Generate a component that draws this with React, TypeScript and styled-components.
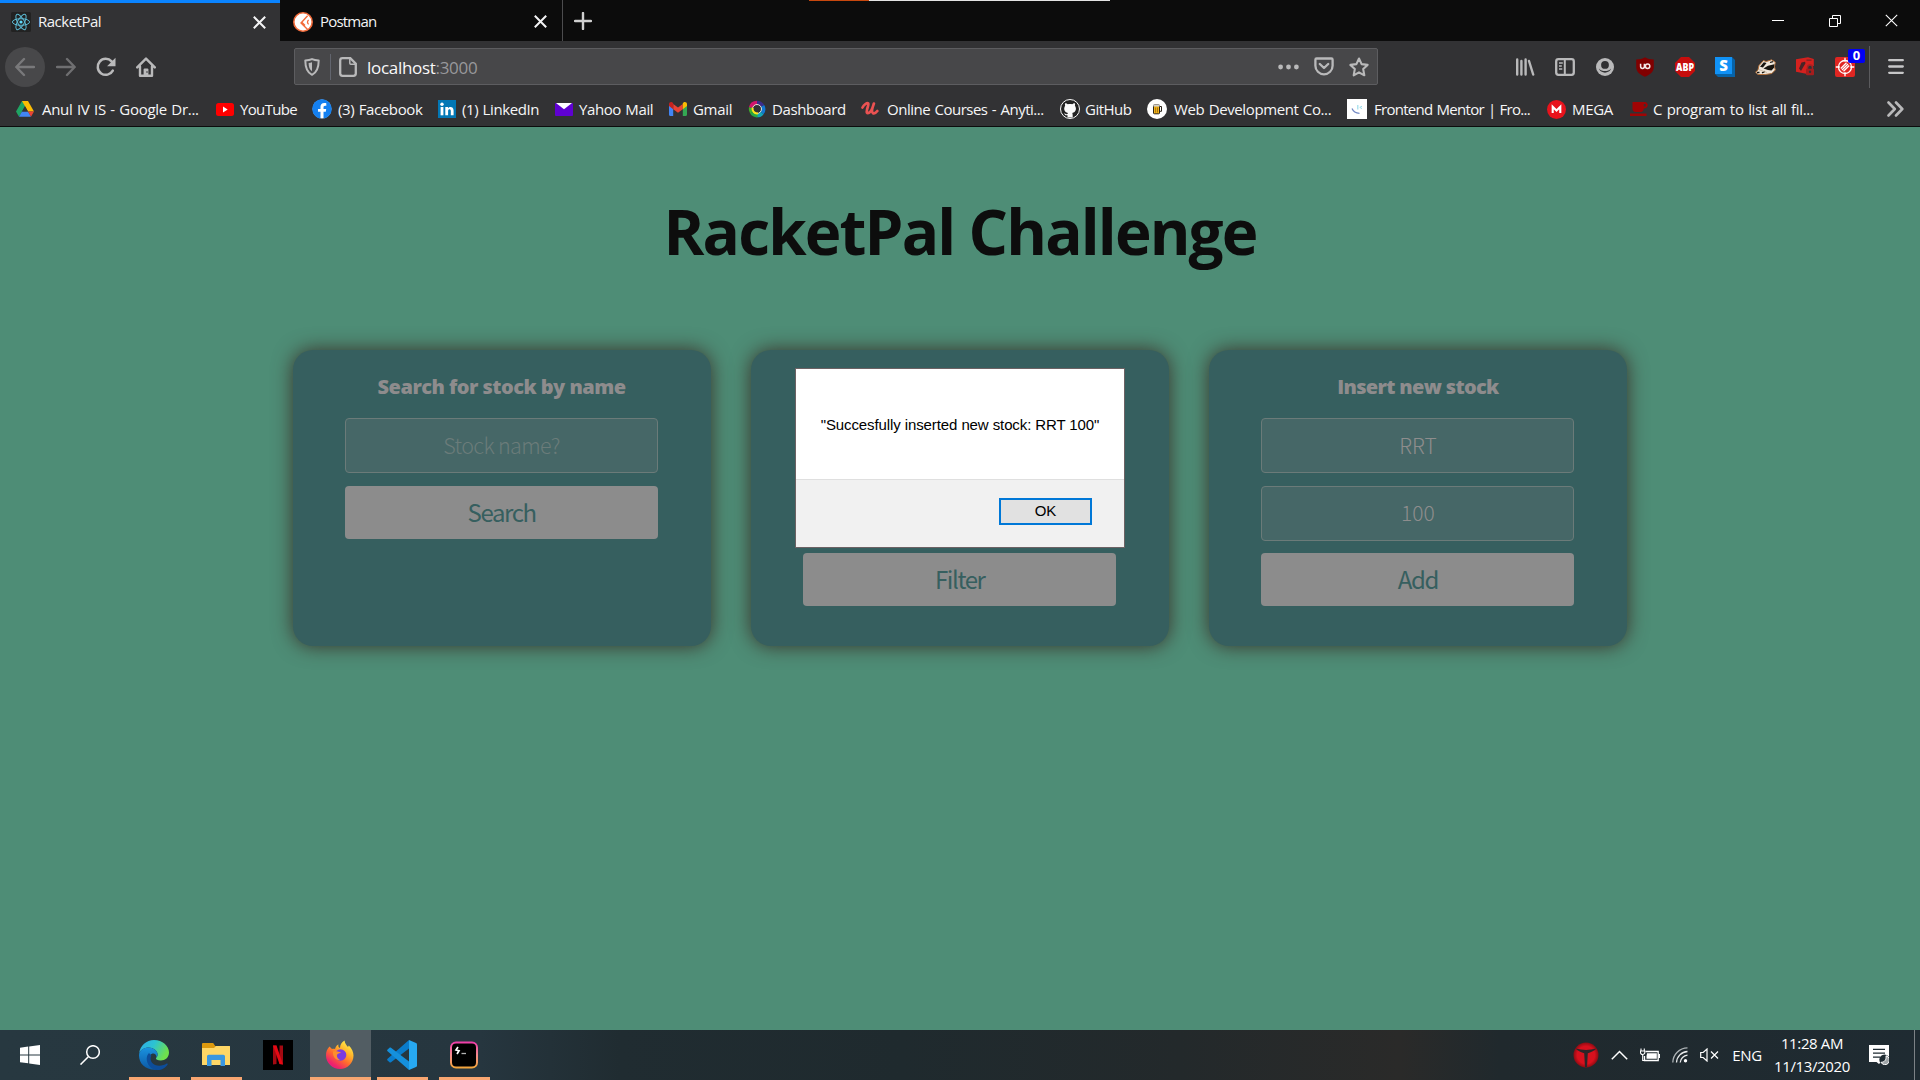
import React from "react";
import styled, { createGlobalStyle } from "styled-components";
import { FaFacebook } from "react-icons/fa";

const GlobalStyle = createGlobalStyle`
  * { box-sizing: border-box; }
  html, body { margin: 0; padding: 0; overflow: hidden; }
  body { font-family: "Open Sans", "Noto Sans", sans-serif; background: #4e8d76; }
  svg { display: block; flex: none; }
`;

const Screen = styled.div`
  width: 1920px;
  height: 1080px;
  display: flex;
  flex-direction: column;
  overflow: hidden;
`;

/* ---------- browser chrome ---------- */
const Chrome = styled.header`
  height: 127px;
  flex: none;
  background: #323234;
  border-bottom: 1px solid #0c0c0d;
  display: flex;
  flex-direction: column;
`;

const TabStrip = styled.div`
  position: relative;
  height: 41px;
  display: flex;
  background: #0c0c0c;
`;

const SnapHint = styled.div`
  position: absolute;
  top: 0;
  left: 809px;
  width: 301px;
  height: 1px;
  background: linear-gradient(90deg, #c8480e 60px, #e4e4e4 60px);
`;

const Tab = styled.div<{ $active?: boolean }>`
  width: ${(p) => (p.$active ? 280 : 283)}px;
  height: 41px;
  display: flex;
  align-items: center;
  padding: ${(p) => (p.$active ? "0 14px 0 11px" : "2px 15px 0 13px")};
  color: #f4f4f5;
  background: ${(p) => (p.$active ? "#323234" : "#0c0c0c")};
  border-top: ${(p) => (p.$active ? "3px solid #0a84ff" : "none")};
  border-right: ${(p) => (p.$active ? "none" : "1px solid #4c4c4e")};
`;

const TabTitle = styled.span<{ $spacing: number }>`
  flex: 1;
  margin-left: 7px;
  padding-bottom: 2px;
  font-size: 15px;
  line-height: 20px;
  letter-spacing: ${(p) => p.$spacing}px;
  white-space: nowrap;
`;

const NewTab = styled.div`
  width: 43px;
  display: flex;
  align-items: center;
  justify-content: center;
  padding-right: 3px;
`;

const WindowButtons = styled.div`
  margin-left: auto;
  display: flex;
  align-items: center;
`;

const WindowButton = styled.div`
  width: 57px;
  height: 40px;
  display: flex;
  align-items: center;
  justify-content: center;
`;

const NavBar = styled.div`
  height: 51px;
  display: flex;
  align-items: center;
  padding-left: 5px;
`;

const NavButton = styled.div<{ $round?: boolean }>`
  width: 40px;
  height: 40px;
  margin-right: ${(p) => (p.$round ? 1 : 0)}px;
  border-radius: 50%;
  background: ${(p) => (p.$round ? "#48484a" : "transparent")};
  display: flex;
  align-items: center;
  justify-content: center;
`;

const UrlBar = styled.div`
  width: 1084px;
  height: 37px;
  margin-left: 128px;
  display: flex;
  align-items: center;
  background: #474749;
  border: 1px solid #5d5d60;
  border-radius: 2px;
  padding: 0 8px 0 9px;
`;

const UrlDivider = styled.span`
  width: 1px;
  height: 26px;
  margin: 0 8px 0 10px;
  background: #62656e;
`;

const UrlText = styled.span`
  flex: 1;
  margin: 1px 0 0 10px;
  font-size: 17px;
  letter-spacing: -0.3px;
  color: #f9f9fa;
  white-space: nowrap;
  em {
    font-style: normal;
    color: #98989b;
  }
`;

const UrlActions = styled.div`
  display: flex;
  align-items: center;
  gap: 15px;
`;

const Extensions = styled.div`
  margin-left: auto;
  display: flex;
  align-items: center;
`;

const Extension = styled.div`
  position: relative;
  width: 40px;
  height: 40px;
  display: flex;
  align-items: center;
  justify-content: center;
`;

const Badge = styled.span`
  position: absolute;
  top: 2px;
  left: 23px;
  width: 17px;
  height: 14px;
  border-radius: 2px;
  background: #0000f5;
  color: #fff;
  font: bold 13px/13px "Open Sans", sans-serif;
  text-align: center;
`;

const MenuButton = styled.div`
  width: 51px;
  height: 42px;
  margin-left: 4px;
  padding-left: 2px;
  border-left: 1px solid #5b5b5e;
  display: flex;
  align-items: center;
  justify-content: center;
`;

const Bookmarks = styled.nav`
  height: 34px;
  display: flex;
  align-items: center;
  padding-left: 15px;
`;

const Bookmark = styled.div<{ $width: number }>`
  width: ${(p) => p.$width}px;
  display: flex;
  align-items: center;
`;

const BookmarkIcon = styled.span`
  width: 20px;
  display: flex;
  justify-content: center;
`;

const BookmarkLabel = styled.span<{ $spacing: number; $gap: number }>`
  margin-left: ${(p) => p.$gap}px;
  padding-bottom: 1px;
  font-size: 15px;
  line-height: 20px;
  letter-spacing: ${(p) => p.$spacing}px;
  word-spacing: 0.9px;
  color: #f6f6f7;
  white-space: nowrap;
`;

const Overflow = styled.div`
  flex: 1;
  display: flex;
  justify-content: flex-end;
  padding-right: 16px;
`;

/* ---------- page ---------- */
const Page = styled.main`
  position: relative;
  flex: 1;
  display: flex;
  flex-direction: column;
  background: #4e8d76;
`;

const Title = styled.h1`
  margin: 61px 0 0;
  height: 86px;
  font-size: 62px;
  line-height: 86px;
  font-weight: 700;
  letter-spacing: -1.85px;
  text-align: center;
  color: #0d0d0d;
  white-space: nowrap;
`;

const CardRow = styled.section`
  margin: 76px 292.5px 0 293px;
  display: grid;
  grid-template-columns: repeat(3, 1fr);
  gap: 40px;
`;

const Card = styled.article`
  height: 296px;
  padding: 24px 53px 0 52px;
  display: flex;
  flex-direction: column;
  border-radius: 20px;
  background: #365f5f;
  box-shadow: 0 0 20px #3a322b;
`;

const CardTitle = styled.h3<{ $spacing: number }>`
  height: 26px;
  margin: 0 0 18px;
  font-size: 20px;
  line-height: 25px;
  font-weight: 800;
  letter-spacing: ${(p) => p.$spacing}px;
  text-align: center;
  color: #8e8c8d;
  white-space: nowrap;
`;

const Field = styled.div<{ $placeholder?: boolean }>`
  height: 55px;
  margin-bottom: 12.5px;
  padding-bottom: 2px;
  display: flex;
  align-items: center;
  justify-content: center;
  border: 1px solid #6b7b79;
  border-radius: 4px;
  background: #466767;
  font-family: "Noto Sans CJK SC", sans-serif;
  font-weight: 300;
  font-size: ${(p) => (p.$placeholder ? 21.5 : 21)}px;
  line-height: 30px;
  letter-spacing: ${(p) => (p.$placeholder ? -0.65 : 0)}px;
  color: ${(p) => (p.$placeholder ? "#6b7c7a" : "#8e8d8d")};
`;

const Submit = styled.button`
  height: 53px;
  padding: 0 0 1px;
  border: 0;
  border-radius: 4px;
  background: #8c8c8c;
  font-family: "Noto Sans CJK SC", sans-serif;
  font-size: 24px;
  line-height: 30px;
  letter-spacing: -1.4px;
  color: #365f5f;
`;

const Dialog = styled.div`
  position: absolute;
  left: 795px;
  top: 241px;
  width: 330px;
  height: 180px;
  border: 1px solid #6c6264;
  background: #fff;
  display: flex;
  flex-direction: column;
  font-family: "Liberation Sans", Arial, sans-serif;
  font-size: 15px;
  color: #000;
`;

const Message = styled.p`
  flex: 1;
  margin: 0;
  padding: 1px 0 0;
  display: flex;
  align-items: center;
  justify-content: center;
  letter-spacing: -0.1px;
  white-space: nowrap;
`;

const DialogFooter = styled.div`
  height: 68px;
  padding: 18px 32px 0 0;
  display: flex;
  justify-content: flex-end;
  border-top: 1px solid #dfdfdf;
  background: #f1f1f1;
`;

const OkButton = styled.button`
  width: 93px;
  height: 27px;
  padding: 0 0 2px;
  border: 2px solid #0078d7;
  background: #e1e1e1;
  font: 15px "Liberation Sans", Arial, sans-serif;
  color: #000;
`;

/* ---------- taskbar ---------- */
const Taskbar = styled.footer`
  height: 50px;
  flex: none;
  display: flex;
  background: linear-gradient(90deg, #273840 0, #26363f 480px, #202c31 620px, #1f2a2e 900px, #23292b 1180px, #2a2a29 1400px, #20292d 1500px, #1f2b32 1920px);
`;

const TaskItem = styled.div<{ $width: number; $open?: boolean; $active?: boolean }>`
  width: ${(p) => p.$width}px;
  height: 50px;
  margin-right: ${(p) => (p.$open ? (p.$active ? 6 : 11) : 0)}px;
  padding-right: ${(p) => (p.$open ? 1 : 0)}px;
  display: flex;
  align-items: center;
  justify-content: center;
  background: ${(p) => (p.$active ? "#525d63" : "transparent")};
  box-shadow: ${(p) => (p.$open ? "inset 0 -3px #f8a671" : "none")};
`;

const Pinned = styled(TaskItem)`
  justify-content: flex-start;
  padding-left: 10px;
`;

const Tray = styled.div`
  margin-left: auto;
  display: flex;
  align-items: center;
`;

const TrayIcon = styled.div<{ $width: number }>`
  width: ${(p) => p.$width}px;
  display: flex;
  justify-content: center;
`;

const Language = styled.span`
  width: 46px;
  padding-left: 4px;
  text-align: center;
  font-size: 15px;
  letter-spacing: -0.4px;
  color: #fff;
`;

const Clock = styled.div`
  width: 88px;
  display: flex;
  flex-direction: column;
  align-items: center;
  font-size: 15px;
  line-height: 23px;
  letter-spacing: -0.37px;
  color: #fff;
  white-space: nowrap;
`;

const ShowDesktop = styled.div`
  width: 6px;
  height: 50px;
  margin-left: 12px;
  border-left: 1px solid #7c8286;
`;

/* ---------- icons ---------- */
const G = "#b9b9ba";

const ReactLogo = () => (
  <svg width="20" height="20" viewBox="0 0 20 20">
    <rect width="20" height="20" rx="1.5" fill="#222" />
    <g fill="none" stroke="#5cb9d2" strokeWidth="1">
      <ellipse cx="10" cy="10" rx="8.6" ry="3.3" />
      <ellipse cx="10" cy="10" rx="8.6" ry="3.3" transform="rotate(60 10 10)" />
      <ellipse cx="10" cy="10" rx="8.6" ry="3.3" transform="rotate(120 10 10)" />
    </g>
    <circle cx="10" cy="10" r="1.6" fill="#61dafb" />
  </svg>
);

const PostmanLogo = () => (
  <svg width="20" height="20" viewBox="0 0 20 20">
    <circle cx="10" cy="10" r="9.2" fill="#fff" stroke="#f26b3a" strokeWidth="1.6" />
    <path d="M14.6 3.8 8 11l6.4 6.2M8.8 10.2l3.2 3.2" fill="none" stroke="#f26b3a" strokeWidth="1.4" />
    <path d="M15.6 7.8c-1.4 1.4-1.4 3.2 0 4.6" fill="none" stroke="#f26b3a" strokeWidth="1.2" />
  </svg>
);

const Cross = ({ size = 13, w = 2, color = "#f4f4f5" }: { size?: number; w?: number; color?: string }) => (
  <svg width={size} height={size} viewBox="0 0 13 13">
    <path d="M.8.8 12.2 12.2M12.2.8.8 12.2" stroke={color} strokeWidth={w} fill="none" />
  </svg>
);

const ArrowIcon = ({ flip, color }: { flip?: boolean; color: string }) => (
  <svg width="20" height="20" viewBox="0 0 20 20">
    <path
      d="M19 10H1.5M9 2 1.3 10 9 18"
      transform={flip ? "matrix(-1 0 0 1 20 0)" : undefined}
      fill="none"
      stroke={color}
      strokeWidth="2.4"
      strokeLinecap="round"
      strokeLinejoin="round"
    />
  </svg>
);

const ReloadIcon = () => (
  <svg width="20" height="20" viewBox="0 0 20 20">
    <path d="M16.8 13.6A8 8 0 1 1 15.6 4.4L17 6" fill="none" stroke={G} strokeWidth="2.5" strokeLinecap="round" />
    <path d="M19.5.8v8.4h-8.4z" fill={G} />
  </svg>
);

const HomeIcon = () => (
  <svg width="20" height="20" viewBox="0 0 20 20">
    <path d="M1.2 10.4 10 1.6l8.8 8.8M4 9.5V18.7h12V9.5" fill="none" stroke={G} strokeWidth="2.4" strokeLinecap="round" strokeLinejoin="round" />
    <path d="M7.6 19v-6.5a1 1 0 0 1 1-1h2.8a1 1 0 0 1 1 1V19z" fill={G} />
    <path d="M10.4 15h1.2" stroke="#323234" strokeWidth="1.4" />
  </svg>
);

const ShieldIcon = () => (
  <svg width="16" height="18" viewBox="0 0 16 18">
    <path d="M8 1.1c2 .9 4.2 1.2 6.7 1.3 0 6.5-1.5 11.8-6.7 14.4C2.8 14.2 1.3 8.9 1.3 2.4 3.8 2.3 6 2 8 1.1z" fill="none" stroke={G} strokeWidth="2" strokeLinejoin="round" />
    <path d="M8 4.3v9C5.5 11.5 4.7 8.8 4.6 5c1.2-.1 2.4-.3 3.4-.7z" fill={G} />
  </svg>
);

const PageIcon = () => (
  <svg width="18" height="20" viewBox="0 0 18 20">
    <path d="M3.5 1.2h7.8l5.5 5.5v9.8a2.3 2.3 0 0 1-2.3 2.3h-11a2.3 2.3 0 0 1-2.3-2.3v-13a2.3 2.3 0 0 1 2.3-2.3z" fill="none" stroke={G} strokeWidth="2.3" />
    <path d="M10.8 1.5v4.7a1 1 0 0 0 1 1h4.7" fill="none" stroke={G} strokeWidth="1.5" />
  </svg>
);

const DotsIcon = () => (
  <svg width="21" height="6" viewBox="0 0 21 6" fill={G}>
    <circle cx="2.6" cy="3" r="2.4" />
    <circle cx="10.5" cy="3" r="2.4" />
    <circle cx="18.4" cy="3" r="2.4" />
  </svg>
);

const PocketIcon = () => (
  <svg width="20" height="19" viewBox="0 0 20 19" fill="none" stroke={G} strokeLinecap="round" strokeLinejoin="round">
    <path d="M2.6 1.5h14.8c.7 0 1.2.5 1.2 1.2v6A8.6 8.6 0 0 1 1.4 8.7v-6c0-.7.5-1.2 1.2-1.2z" strokeWidth="2.3" />
    <path d="m5.8 7 4.2 4 4.2-4" strokeWidth="2.4" />
  </svg>
);

const StarIcon = () => (
  <svg width="20" height="20" viewBox="0 0 20 20">
    <path d="m10 1.5 2.6 5.6 6 .8-4.4 4.2 1.1 6.2L10 15.3l-5.3 3 1.1-6.2L1.4 7.9l6-.8z" fill="none" stroke={G} strokeWidth="2.1" strokeLinejoin="round" />
  </svg>
);

const LibraryIcon = () => (
  <svg width="20" height="20" viewBox="0 0 20 20" fill="none" stroke={G} strokeWidth="2.4" strokeLinecap="round">
    <path d="M2.2 2.5v15M6.4 4v13.500M10.6 2.5v15M14 4l4.2 13.5" />
  </svg>
);

const SidebarIcon = () => (
  <svg width="20" height="18" viewBox="0 0 20 18" fill="none" stroke={G}>
    <rect x="1.2" y="1.2" width="17.6" height="15.6" rx="2.2" strokeWidth="2.3" />
    <path d="M9.8 1v16" strokeWidth="2" />
    <path d="M4 5h3.8M4 8h2.8M4 11h3.3" strokeWidth="1.4" />
  </svg>
);

const AccountIcon = () => (
  <svg width="18" height="18" viewBox="0 0 18 18">
    <circle cx="9" cy="9" r="9" fill={G} />
    <circle cx="9" cy="6.9" r="3.9" fill="#323234" />
    <path d="M2.9 10.4c.4 1.2 1.3 2.400 2.400 3.200 2.300 1.500 5.100 1.500 7.400 0 1.100-.8 2-2 2.400-3.200-1.500 2-3.700 2.700-6.100 2.700s-4.600-.7-6.100-2.700z" fill="#323234" />
  </svg>
);

const UblockIcon = () => (
  <svg width="18" height="20" viewBox="0 0 18 20">
    <path d="M9 .2c2.5 1.5 5.5 2.2 8.8 2.3v7.7c0 4.5-3.8 7.5-8.800 9.600C4 17.700.2 14.700.2 10.200V2.500C3.500 2.400 6.500 1.700 9 .2z" fill="#800000" />
    <path d="M4.6 6.800v2.700a1.900 1.900 0 0 0 3.800 0V6.800" fill="none" stroke="#f4eaea" strokeWidth="1.5" />
    <circle cx="11.600" cy="9.200" r="2.200" fill="none" stroke="#f4eaea" strokeWidth="1.500" />
  </svg>
);

const AbpIcon = () => (
  <svg width="20" height="20" viewBox="0 0 20 20">
    <path d="M6 0h8l6 6v8l-6 6H6l-6-6V6z" fill="#c70d0c" />
    <text x="10" y="14" textAnchor="middle" textLength="18" lengthAdjust="spacingAndGlyphs" fontFamily="Open Sans" fontWeight="800" fontSize="11" fill="#fff">ABP</text>
  </svg>
);

const StylusIcon = () => (
  <svg width="20" height="20" viewBox="0 0 20 20">
    <path d="M17 0l3 3v17H3l-3-3z" fill="#0763a8" />
    <rect width="17" height="17" fill="#1192f6" />
    <text x="8.500" y="14" textAnchor="middle" fontFamily="Open Sans" fontWeight="800" fontSize="15" fill="#fff">S</text>
  </svg>
);

const BadgerIcon = () => (
  <svg width="21" height="16" viewBox="0 0 21 16">
    <path d="M.6 13.200 3 11l1-4.500L8.500 1.500l2.500 1 2-.5L16.500.8l3.800 2.400-.8 4.500.8 3.300-3.500 3.500-6.500 1H3z" fill="#efe6da" stroke="#b3703a" strokeWidth="1" />
    <path d="M5 7.800 8.800 3.200l2.700.8L8 8.500z" fill="#17140f" />
    <path d="M8.500 9.500 13 6.800l6.300-1.500-.3 3.500-2.500 2.700-3.500-.5z" fill="#17140f" />
    <path d="M2 13.500h2.500M7 13.800l3-1.500M15 3.500l3-.9" stroke="#17140f" strokeWidth="1.300" />
    <path d="M3.500 10.500 12 13.500" stroke="#c9b79f" strokeWidth=".8" />
  </svg>
);

const RedLockIcon = () => (
  <svg width="18" height="19" viewBox="0 0 18 19">
    <path d="M0 2.300 12 .3 17.800 2v7h-2.300l-1.500-1-2.700 1.800V17L0 14.800z" fill="#d5211e" />
    <path d="M5.500 5.500 9 4.800l.5 1.500L7 10.500 5 14 3 11.500z" fill="#4a2426" />
    <path d="M10.500 2.500h5v1.300h-5z" fill="#7d2424" />
    <path d="M11.500 12v-1.500a2.500 2.500 0 0 1 5 0V12" fill="none" stroke="#a82121" strokeWidth="1.500" />
    <rect x="10" y="11.700" width="8" height="6.500" rx="1" fill="#a51d1d" />
    <circle cx="14" cy="14.800" r="1.200" fill="#323234" />
  </svg>
);

const TargetIcon = () => (
  <svg width="20" height="20" viewBox="0 0 20 20">
    <rect width="20" height="20" rx="2" fill="#e02622" />
    <g fill="none" stroke="#fff" strokeWidth="1.300">
      <circle cx="10" cy="10" r="6.500" />
      <path d="M10 .8v4M10 15.200v4M.8 10h4M15.200 10h4M5.800 11.500 11.500 5.800M8.500 14.200 14.200 8.500M7 13 13 7" />
    </g>
  </svg>
);

const DriveIcon = () => (
  <svg width="18" height="16" viewBox="0 0 18 16">
    <path d="M6 0h6L6 10.500 3 15.800 0 10.500z" fill="#1fa463" />
    <path d="M6 0h6l6 10.500h-6z" fill="#fbbc04" />
    <path d="M6 10.500h6l3 5.300H3z" fill="#4285f4" />
    <path d="M12 10.500h6l-3 5.300z" fill="#ea4335" />
    <path d="M9 5.200 12 10.500H6z" fill="#323234" />
  </svg>
);

const YouTubeIcon = () => (
  <svg width="18" height="13" viewBox="0 0 18 13">
    <rect width="18" height="13" rx="2.500" fill="#f00" />
    <path d="M7 3.600v5.800l4.700-2.900z" fill="#fff" />
  </svg>
);

const FacebookIcon = () => (
  <svg width="20" height="20" viewBox="0 0 20 20">
    <circle cx="10" cy="10" r="9.400" fill="#fff" />
    <FaFacebook size={20} color="#1580f0" />
  </svg>
);

const LinkedInIcon = () => (
  <svg width="18" height="18" viewBox="0 0 18 18">
    <rect width="18" height="18" fill="#0277b5" />
    <rect x="2.600" y="7" width="2.800" height="8.300" fill="#fff" />
    <circle cx="4" cy="4.200" r="1.700" fill="#fff" />
    <path d="M7.300 7H10v1.200c1.300-2 5.600-2 5.600 2.200v4.900h-2.800v-4.400c0-2.300-2.700-2.200-2.700 0v4.400H7.300z" fill="#fff" />
  </svg>
);

const YahooMailIcon = () => (
  <svg width="18" height="13" viewBox="0 0 18 13">
    <rect width="18" height="13" rx="1" fill="#5f01d1" />
    <path d="M1 0h16L9 6.300z" fill="#fff" />
  </svg>
);

const GmailIcon = () => (
  <svg width="18" height="14" viewBox="0 0 18 14">
    <path d="M0 3v9.800c0 .6.500 1.200 1.200 1.200h3V6z" fill="#4285f4" />
    <path d="M18 3v9.800c0 .6-.5 1.200-1.200 1.200h-3V6z" fill="#34a853" />
    <path d="M4.200 2 9 5.600 13.800 2v5.200L9 10.800 4.200 7.200z" fill="#ea4335" />
    <path d="M0 2.200C0 .4 2-.6 3.400.5l.8.600v6.100L0 4z" fill="#c5221f" />
    <path d="M18 2.200c0-1.800-2-2.800-3.400-1.700l-.8.600v6.100L18 4z" fill="#fbbc04" />
  </svg>
);

const DashboardIcon = () => (
  <svg width="18" height="18" viewBox="0 0 18 18" fill="none" strokeWidth="4">
    <path d="M9 2.700a6.300 6.300 0 0 1 5.500 3.200" stroke="#3b2d8c" />
    <path d="M14.500 5.900a6.300 6.300 0 0 1-.5 7" stroke="#1277d3" />
    <path d="M14 12.900a6.300 6.300 0 0 1-6.500 2.200" stroke="#13a3b8" />
    <path d="M9.500 15.300A6.300 6.300 0 0 1 3.800 12.500" stroke="#27a844" />
    <path d="M3.800 12.500A6.300 6.300 0 0 1 2.900 7.500" stroke="#3fae2c" />
    <path d="M2.900 7.500A6.300 6.300 0 0 1 9 2.700" stroke="#d2146c" />
    <circle cx="9" cy="9" r="4.500" stroke="#e9e4d0" strokeWidth="1" />
    <path d="M4.600 7.800a4.600 4.600 0 0 0 5.400 5.500" stroke="#ffe51a" strokeWidth="2" />
  </svg>
);

const UdemyIcon = () => (
  <svg width="18" height="18" viewBox="0 0 18 18">
    <path d="M1.500 7.500C3 4.500 6 2.500 7.200 3.300c1.300 1-2.400 7-1.300 9.300.9 1.800 3.600-.5 5-3.200l2-5.800M12.800 3.600c-1.300 3.700-2.500 8.200-1 9.400 1.400.9 3.200-.3 4.500-2" fill="none" stroke="#eb5252" strokeWidth="2.700" strokeLinecap="round" strokeLinejoin="round" />
  </svg>
);

const GitHubIcon = () => (
  <svg width="20" height="20" viewBox="0 0 20 20">
    <circle cx="10" cy="10" r="9.500" fill="#222" stroke="#fafafa" strokeWidth="1" />
    <path d="M5.200 4.200c1 0 2 .5 2.700 1 1.400-.3 2.800-.3 4.200 0 .7-.5 1.700-1 2.700-1 .4 1 .4 1.800.1 2.600 2 2.600 1.200 6.600-2.700 7.200.5.800.5 1.500.5 4.200a9 9 0 0 1-5.200 0v-2c-2.200.4-2.800-.7-3.500-2 1 .1 1.700 1.300 3.500.9.100-.5.200-.8.500-1.100-3.900-.6-4.700-4.600-2.800-7.200-.3-.8-.4-1.600 0-2.600z" fill="#fafafa" />
  </svg>
);

const BeerIcon = () => (
  <svg width="20" height="20" viewBox="0 0 20 20">
    <circle cx="10" cy="10" r="10" fill="#fff" />
    <rect x="6.500" y="5.800" width="6" height="9" rx=".8" fill="#f4b51b" stroke="#2b2419" strokeWidth="1" />
    <path d="M12.500 7.500h2v4.800h-2" fill="none" stroke="#2b2419" strokeWidth="1" />
    <path d="M6.300 5.500h6.400v2H6.300z" fill="#cfcfcf" />
    <path d="M8.600 8.500v5M10.500 8.500v5" stroke="#8a5d0a" strokeWidth=".7" />
  </svg>
);

const MentorIcon = () => (
  <svg width="20" height="20" viewBox="0 0 20 20">
    <rect width="20" height="20" fill="#fff" />
    <path d="M5 9.500c1.200 3 3.600 4.600 7.500 4.800" fill="none" stroke="#7288c4" strokeWidth="1.200" />
    <path d="M10.800 6v4.500" stroke="#9bdcec" strokeWidth="1.200" />
    <path d="m15 7.200-2.200 1.200L15 9.600" fill="none" stroke="#9bdcec" strokeWidth="1" />
  </svg>
);

const MegaIcon = () => (
  <svg width="19" height="19" viewBox="0 0 19 19">
    <circle cx="9.500" cy="9.500" r="9.500" fill="#e8131c" />
    <path d="M5.700 13V6.800l3.800 3.700 3.800-3.700V13" fill="none" stroke="#fff" strokeWidth="2.100" />
  </svg>
);

const CupIcon = () => (
  <svg width="18" height="14" viewBox="0 0 18 14">
    <path d="M2.500 0h12c4.500 0 4.300 6.500-.7 6.500C13.500 8.500 12.500 10 11 10H5.500C3.500 10 2.500 8.500 2.500 7zM0 11.500h16.500V14H0z" fill="#a00404" />
    <rect x="13.800" y="2" width="1.800" height="2.400" fill="#323234" />
  </svg>
);

const WindowsIcon = () => (
  <svg width="20" height="20" viewBox="0 0 20 20" fill="#fff">
    <path d="M0 2.800 8.200 1.600v7.800H0zM9.200 1.500 20 0v9.400H9.200zM0 10.400h8.200v7.900L0 17.200zM9.200 10.400H20V20L9.200 18.500z" />
  </svg>
);

const SearchIcon = () => (
  <svg width="20" height="20" viewBox="0 0 20 20" fill="none" stroke="#fff" strokeWidth="1.500">
    <circle cx="13" cy="7" r="6.300" />
    <path d="M8.300 11.800.5 19.600" />
  </svg>
);

const EdgeIcon = () => (
  <svg width="30" height="30" viewBox="0 0 30 30">
    <defs>
      <linearGradient id="edgeTop" x1="0" y1="0" x2="1" y2=".4">
        <stop offset="0" stopColor="#2fa9ea" />
        <stop offset=".5" stopColor="#2cc3d2" />
        <stop offset="1" stopColor="#6fe04c" />
      </linearGradient>
      <linearGradient id="edgeBody" x1="0" y1="0" x2="0" y2="1">
        <stop offset="0" stopColor="#1a93e0" />
        <stop offset="1" stopColor="#0c59a4" />
      </linearGradient>
    </defs>
    <path d="M.2 13.500C1 5.500 7.500 0 15 0c8.500 0 15 6 15 12.500 0 5-3.800 8-8.200 8-3.400 0-4.800-1.200-4.800-2 0-.9 1.600-1.300 1.600-4.200C18.600 10.500 14 7.500 9.800 7.500 5 7.500 1.500 10 .2 13.500z" fill="url(#edgeTop)" />
    <path d="M.2 13.500C1.500 10 5 7.500 9.300 7.500c4.700 0 9.300 3 9.300 6.800 0 1.500-.5 2.600-1 3.200-.2-2.700-1.500-4-3.300-4-2.500 0-4.300 2.500-4.100 5.500.3 5 4.300 9.500 9.800 10.300C8 31.500 0 24.500 0 15.500z" fill="url(#edgeBody)" />
    <path d="M12.300 15.500c-2.500 6 2 10.200 8 10.200 3 0 5.300-.9 7.400-2.200.7-.4 1.200.3.900.9-2 3.300-5.800 5.500-10 5.600C12 30 7.500 24 7.700 18.500c.1-2 .8-4 2.300-5.500" fill="#0d4d9a" />
  </svg>
);

const ExplorerIcon = () => (
  <svg width="28" height="24" viewBox="0 0 28 24">
    <path d="M0 1.200C0 .5.500 0 1.200 0h10l2 3H28v5H0z" fill="#dd9a0e" />
    <path d="M0 5h12l2-2h13c.6 0 1 .4 1 1v18H0z" fill="#ffd766" />
    <path d="M5 23V13.500c0-1 .7-1.700 1.700-1.700h14.600c1 0 1.700.7 1.700 1.700V23h-4.500v-6h-9v6z" fill="#3a97e0" />
  </svg>
);

const NetflixIcon = () => (
  <svg width="30" height="30" viewBox="0 0 30 30">
    <rect width="30" height="30" fill="#000" />
    <path d="M10 5.500h3.500V24l-3.500.5zM16.500 5.500H20v19l-3.500-.5z" fill="#a30911" />
    <path d="M10 5.500h3.500L20 24.500 16.500 24z" fill="#e50914" />
  </svg>
);

const FirefoxIcon = () => (
  <svg width="30" height="30" viewBox="0 0 30 30">
    <defs>
      <linearGradient id="fox" x1=".9" y1="0" x2=".2" y2="1">
        <stop offset=".05" stopColor="#fff44f" />
        <stop offset=".35" stopColor="#ffb42a" />
        <stop offset=".6" stopColor="#ff6a2e" />
        <stop offset=".85" stopColor="#f0246a" />
        <stop offset="1" stopColor="#e31587" />
      </linearGradient>
    </defs>
    <path d="M4.500 6.500 7 9c1-.3 2-.3 3 0 .8-2.500 1.800-4 3.500-4.500-.5 1.500 0 3 1.500 3.500C15 5 16.500 2 19.500.5c.5 3.500 2 4.500 3.500 6.500l.8-1.500c3 3 4.700 6.500 4.700 10C28.500 23 22.500 29 15 29S1 23 1 15.500c0-4 1-6.500 3.500-9z" fill="url(#fox)" />
    <circle cx="15.500" cy="15" r="5.800" fill="#7a3be0" />
    <path d="M8 11.500c3-1.500 4.500.5 8 .6-1.300 1.600-3.500 1.500-4 3-.4 1.500 1 4.500 3.500 5-4.500.6-8-3-7.500-8.600z" fill="#ff8f2b" />
  </svg>
);

const VSCodeIcon = () => (
  <svg width="30" height="30" viewBox="0 0 30 30">
    <path d="M22 0v8.500L4 22.300c-.5.400-1 .4-1.500 0L.6 20.500c-.6-.5-.6-1.300 0-1.800z" fill="#0a7ccb" />
    <path d="M22 30v-8.500L4 7.700c-.5-.4-1-.4-1.500 0L.6 9.500c-.6.5-.6 1.300 0 1.800z" fill="#1590dc" />
    <path d="M22 0l7 3c.6.300 1 .8 1 1.500v21c0 .7-.4 1.200-1 1.500l-7 3z" fill="#27a9f2" />
  </svg>
);

const TerminalIcon = () => (
  <svg width="28" height="28" viewBox="0 0 28 28">
    <defs>
      <linearGradient id="term" x1="0" y1="0" x2="0" y2="1">
        <stop offset="0" stopColor="#ef3fa9" />
        <stop offset=".5" stopColor="#f58b8f" />
        <stop offset="1" stopColor="#f3a53c" />
      </linearGradient>
    </defs>
    <rect x="1" y="1.500" width="26" height="25" rx="5" fill="#000" stroke="url(#term)" strokeWidth="2" />
    <path d="M8 6 6 9l3 .8L7 13" fill="none" stroke="#fff" strokeWidth="1.700" />
    <path d="M11.500 12.500h4.500" stroke="#b5b5b5" strokeWidth="1.300" />
  </svg>
);

const BallIcon = () => (
  <svg width="26" height="26" viewBox="0 0 26 26">
    <defs>
      <radialGradient id="ball">
        <stop offset="0" stopColor="#d3141f" />
        <stop offset=".7" stopColor="#d9101d" />
        <stop offset="1" stopColor="#8d0c13" />
      </radialGradient>
    </defs>
    <circle cx="13" cy="13" r="12.500" fill="url(#ball)" />
    <path d="M2.500 6.500C6 7 10 8 13 8s7-1 10.500-1.500C21 9 17.500 10.300 14.800 11.300L14 25h-2l-.8-13.700C8.500 10.300 5 9 2.500 6.500z" fill="#2b2629" />
  </svg>
);

const ChevronUp = () => (
  <svg width="17" height="10" viewBox="0 0 17 10">
    <path d="M.8 9.200 8.500 1.500l7.700 7.700" fill="none" stroke="#fff" strokeWidth="1.500" />
  </svg>
);

const BatteryIcon = () => (
  <svg width="20" height="14" viewBox="0 0 20 14">
    <path d="M5.500 3.500h12.700v9H4.500V8" fill="none" stroke="#fff" strokeWidth="1.300" />
    <path d="M7 5.300h9.800v5.500H6.500V8z" fill="#fff" />
    <path d="M18.500 6h1.500v4h-1.500z" fill="#fff" />
    <path d="M1 .5v2.300M4.300.5v2.300M.5 3h4.300v1.500A2 2 0 0 1 2.700 6.500 2 2 0 0 1 .5 4.500zM2.700 6.500v6h2" fill="none" stroke="#fff" strokeWidth="1.100" />
  </svg>
);

const WifiIcon = () => (
  <svg width="16" height="16" viewBox="0 0 16 16" fill="none" strokeWidth="1.300">
    <path d="M.8 15.500A15 15 0 0 1 15.500.8" stroke="#aeb4b7" />
    <path d="M4.500 15.500A11.500 11.500 0 0 1 15.500 4.500" stroke="#e8eaeb" />
    <path d="M8.200 15.500a8 8 0 0 1 7.300-7.300" stroke="#e8eaeb" />
    <circle cx="13.500" cy="13.800" r="1.700" fill="#fff" />
  </svg>
);

const MuteIcon = () => (
  <svg width="19" height="14" viewBox="0 0 19 14" fill="none" stroke="#fff" strokeWidth="1.200">
    <path d="M.7 4.500h2.500L7 1v12L3.200 9.500H.7z" />
    <path d="m11 3.500 7 7M18 3.500l-7 7" />
  </svg>
);

const NoticeIcon = () => (
  <svg width="20" height="20" viewBox="0 0 20 20">
    <path d="M0 0h20v17h-8l-2 2-2.500-2H0z" fill="#fff" />
    <path d="M4 4.300h12M4 8.200h12M4 12.200h7" stroke="#1f2b32" strokeWidth="1.300" />
    <circle cx="15.500" cy="14.800" r="5.200" fill="#1f2b32" />
    <path d="M17 10.800a4.500 4.500 0 1 1-5 6.500c3.300.2 5.600-2.600 5-6.500z" fill="#9fa5a8" stroke="#fff" strokeWidth="1" />
  </svg>
);

/* ---------- data ---------- */
const bookmarks: { icon: React.ReactNode; label: string; width: number; spacing: number; gap: number }[] = [
  { icon: <DriveIcon />, label: "Anul IV IS - Google Dr...", width: 200, spacing: -0.3, gap: 7 },
  { icon: <YouTubeIcon />, label: "YouTube", width: 97, spacing: -0.65, gap: 5 },
  { icon: <FacebookIcon />, label: "(3) Facebook", width: 125, spacing: -0.38, gap: 6 },
  { icon: <LinkedInIcon />, label: "(1) LinkedIn", width: 117, spacing: -0.4, gap: 5 },
  { icon: <YahooMailIcon />, label: "Yahoo Mail", width: 114, spacing: -0.4, gap: 5 },
  { icon: <GmailIcon />, label: "Gmail", width: 79, spacing: -0.3, gap: 5 },
  { icon: <DashboardIcon />, label: "Dashboard", width: 113, spacing: -0.4, gap: 5 },
  { icon: <UdemyIcon />, label: "Online Courses - Anyti...", width: 200, spacing: -0.49, gap: 7 },
  { icon: <GitHubIcon />, label: "GitHub", width: 87, spacing: -0.5, gap: 5 },
  { icon: <BeerIcon />, label: "Web Development Co...", width: 200, spacing: -0.39, gap: 7 },
  { icon: <MentorIcon />, label: "Frontend Mentor | Fro...", width: 199, spacing: -0.72, gap: 7 },
  { icon: <MegaIcon />, label: "MEGA", width: 83, spacing: -0.3, gap: 6 },
  { icon: <CupIcon />, label: "C program to list all fil...", width: 200, spacing: -0.3, gap: 4 },
];

export default function App() {
  return (
    <Screen>
      <GlobalStyle />
      <Chrome>
        <TabStrip>
          <SnapHint />
          <Tab $active>
            <ReactLogo />
            <TabTitle $spacing={-0.5}>RacketPal</TabTitle>
            <Cross />
          </Tab>
          <Tab>
            <PostmanLogo />
            <TabTitle $spacing={-0.8}>Postman</TabTitle>
            <Cross />
          </Tab>
          <NewTab>
            <svg width="18" height="18" viewBox="0 0 18 18">
              <path d="M9 1v16M1 9h16" stroke="#d0d0d0" strokeWidth="2.4" strokeLinecap="round" />
            </svg>
          </NewTab>
          <WindowButtons>
            <WindowButton>
              <svg width="12" height="12" viewBox="0 0 12 12"><path d="M0 5.500h12" stroke="#fff" /></svg>
            </WindowButton>
            <WindowButton>
              <svg width="12" height="12" viewBox="0 0 12 12" fill="none" stroke="#fff">
                <path d="M.5 3.500h8v8h-8zM3.500 3.500v-3h8v8h-3" />
              </svg>
            </WindowButton>
            <WindowButton>
              <Cross w={1.1} color="#fff" />
            </WindowButton>
          </WindowButtons>
        </TabStrip>
        <NavBar>
          <NavButton $round><ArrowIcon color="#79797b" /></NavButton>
          <NavButton><ArrowIcon flip color="#6f6f71" /></NavButton>
          <NavButton><ReloadIcon /></NavButton>
          <NavButton><HomeIcon /></NavButton>
          <UrlBar>
            <ShieldIcon />
            <UrlDivider />
            <PageIcon />
            <UrlText>localhost<em>:3000</em></UrlText>
            <UrlActions>
              <DotsIcon />
              <PocketIcon />
              <StarIcon />
            </UrlActions>
          </UrlBar>
          <Extensions>
            <Extension><LibraryIcon /></Extension>
            <Extension><SidebarIcon /></Extension>
            <Extension><AccountIcon /></Extension>
            <Extension><UblockIcon /></Extension>
            <Extension><AbpIcon /></Extension>
            <Extension><StylusIcon /></Extension>
            <Extension><BadgerIcon /></Extension>
            <Extension><RedLockIcon /></Extension>
            <Extension>
              <TargetIcon />
              <Badge>0</Badge>
            </Extension>
            <MenuButton>
              <svg width="16" height="17" viewBox="0 0 16 17">
                <path d="M1.200 2.200h13.600M1.200 8.500h13.600M1.200 14.800h13.600" stroke="#c6c6c7" strokeWidth="2.300" strokeLinecap="round" />
              </svg>
            </MenuButton>
          </Extensions>
        </NavBar>
        <Bookmarks>
          {bookmarks.map((b) => (
            <Bookmark key={b.label} $width={b.width}>
              <BookmarkIcon>{b.icon}</BookmarkIcon>
              <BookmarkLabel $spacing={b.spacing} $gap={b.gap}>{b.label}</BookmarkLabel>
            </Bookmark>
          ))}
          <Overflow>
            <svg width="17" height="16" viewBox="0 0 17 16">
              <path d="m1.500 1.500 6.300 6.500-6.300 6.500M9 1.500 15.300 8 9 14.500" fill="none" stroke={G} strokeWidth="2.600" strokeLinecap="round" strokeLinejoin="round" />
            </svg>
          </Overflow>
        </Bookmarks>
      </Chrome>

      <Page>
        <Title>RacketPal Challenge</Title>
        <CardRow>
          <Card>
            <CardTitle $spacing={-0.53}>Search for stock by name</CardTitle>
            <Field $placeholder>Stock name?</Field>
            <Submit>Search</Submit>
          </Card>
          <Card>
            <CardTitle $spacing={-0.53} />
            <Field />
            <Field />
            <Submit>Filter</Submit>
          </Card>
          <Card>
            <CardTitle $spacing={-0.68}>Insert new stock</CardTitle>
            <Field>RRT</Field>
            <Field>100</Field>
            <Submit>Add</Submit>
          </Card>
        </CardRow>
        <Dialog>
          <Message>"Succesfully inserted new stock: RRT 100"</Message>
          <DialogFooter>
            <OkButton>OK</OkButton>
          </DialogFooter>
        </Dialog>
      </Page>

      <Taskbar>
        <TaskItem $width={60}><WindowsIcon /></TaskItem>
        <TaskItem $width={60}><SearchIcon /></TaskItem>
        <TaskItem $width={9} />
        <TaskItem $width={51} $open><EdgeIcon /></TaskItem>
        <TaskItem $width={51} $open><ExplorerIcon /></TaskItem>
        <Pinned $width={57}><NetflixIcon /></Pinned>
        <TaskItem $width={61} $open $active><FirefoxIcon /></TaskItem>
        <TaskItem $width={51} $open><VSCodeIcon /></TaskItem>
        <TaskItem $width={51} $open><TerminalIcon /></TaskItem>
        <Tray>
          <TrayIcon $width={32}><BallIcon /></TrayIcon>
          <TrayIcon $width={34}><ChevronUp /></TrayIcon>
          <TrayIcon $width={27}><BatteryIcon /></TrayIcon>
          <TrayIcon $width={33}><WifiIcon /></TrayIcon>
          <TrayIcon $width={26}><MuteIcon /></TrayIcon>
          <Language>ENG</Language>
          <Clock>
            <span>11:28 AM</span>
            <span>11/13/2020</span>
          </Clock>
          <TrayIcon $width={46}><NoticeIcon /></TrayIcon>
          <ShowDesktop />
        </Tray>
      </Taskbar>
    </Screen>
  );
}
